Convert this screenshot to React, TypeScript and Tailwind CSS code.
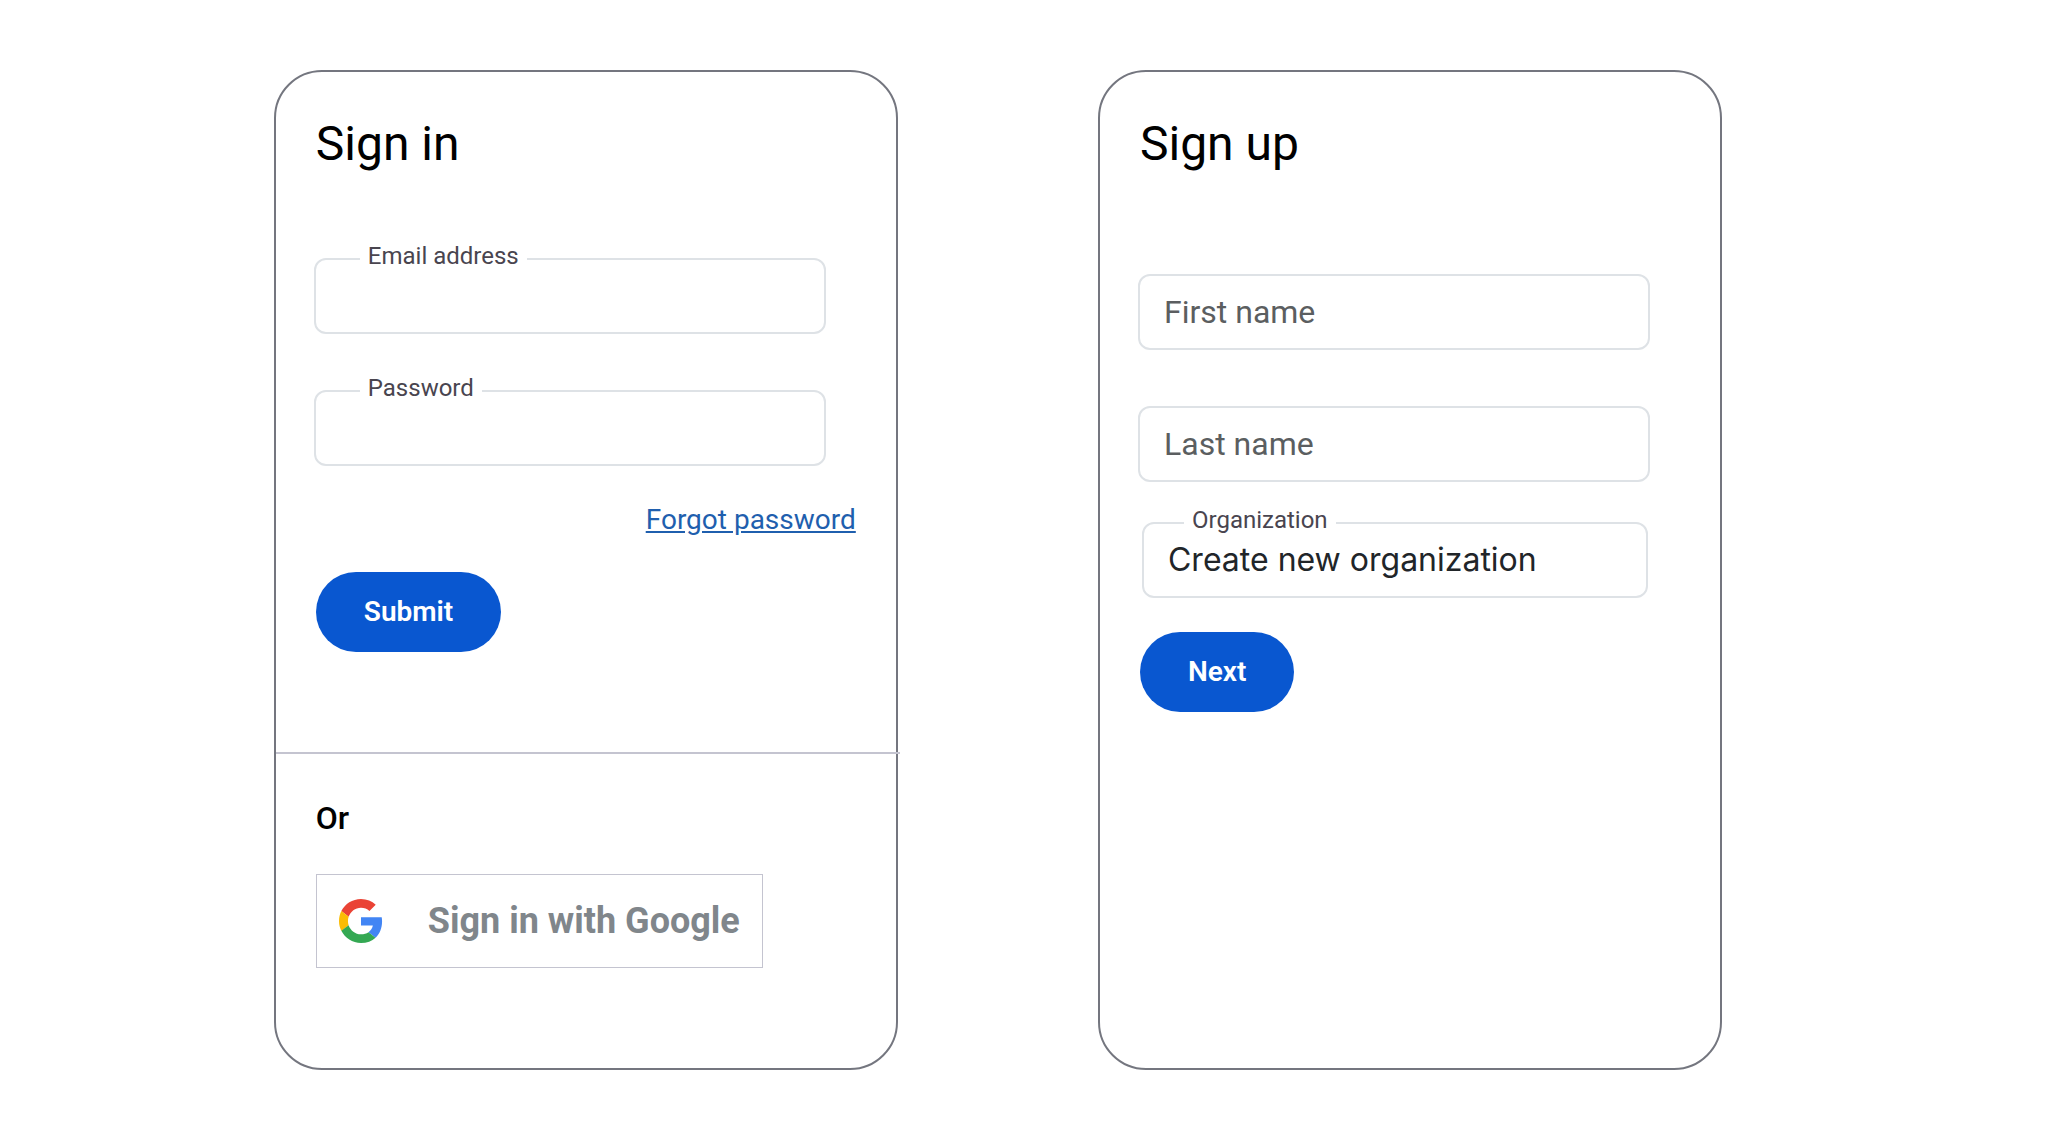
import type { ReactNode } from "react";

const fieldBox =
  "h-[76px] w-full rounded-xl border-2 border-[#dee2e6] bg-white px-6 text-[32px] text-[#212529] outline-none placeholder:text-[#5b5e60] placeholder:opacity-100 focus:border-[#0b57d0]";

const floatingLabel =
  "absolute -top-3.5 left-[46px] bg-white px-2 text-2xl leading-6 text-[#49454f]";

const pillButton =
  "h-20 self-start rounded-full bg-[#0957d0] px-12 text-[28px] leading-10 font-semibold text-white";

function Card({ title, children }: { title: string; children: ReactNode }) {
  return (
    <section className="ml-[68px] flex max-w-[624px] flex-col rounded-[48px] border-2 border-[#74767f] bg-white">
      <h1 className="px-10 pt-10 text-5xl leading-[64px] font-normal">{title}</h1>
      {children}
    </section>
  );
}

function OutlinedField({ id, label, type }: { id: string; label: string; type: string }) {
  return (
    <div className="relative">
      <input id={id} type={type} className={fieldBox} />
      <label htmlFor={id} className={floatingLabel}>
        {label}
      </label>
    </div>
  );
}

function GoogleLogo() {
  return (
    <svg viewBox="0 0 48 48" className="size-11" aria-hidden="true">
      <path
        fill="#EA4335"
        d="M24 9.5c3.54 0 6.71 1.22 9.21 3.6l6.85-6.85C35.9 2.38 30.47 0 24 0 14.62 0 6.51 5.38 2.56 13.22l7.98 6.19C12.43 13.72 17.74 9.5 24 9.5z"
      />
      <path
        fill="#4285F4"
        d="M46.98 24.55c0-1.57-.15-3.09-.38-4.55H24v9.02h12.94c-.58 2.96-2.26 5.48-4.78 7.18l7.73 6c4.51-4.18 7.09-10.36 7.09-17.65z"
      />
      <path
        fill="#FBBC05"
        d="M10.53 28.59c-.48-1.45-.76-2.99-.76-4.59s.27-3.14.76-4.59l-7.98-6.19C.92 16.46 0 20.12 0 24c0 3.88.92 7.54 2.56 10.78l7.97-6.19z"
      />
      <path
        fill="#34A853"
        d="M24 48c6.48 0 11.93-2.13 15.89-5.81l-7.73-6c-2.15 1.45-4.92 2.3-8.16 2.3-6.26 0-11.57-4.22-13.47-9.91l-7.98 6.19C6.51 42.62 14.62 48 24 48z"
      />
    </svg>
  );
}

export default function App() {
  return (
    <main className="min-h-screen bg-white font-['Roboto',sans-serif] text-black">
      <div className="mx-auto grid w-4/5 gap-0.5 py-[70px] lg:grid-cols-2">
        <Card title="Sign in">
          <form className="flex flex-col px-10 pt-[82px]">
            <div className="mr-[30px] -ml-0.5 flex flex-col gap-14">
              <OutlinedField id="email" label="Email address" type="email" />
              <OutlinedField id="password" label="Password" type="password" />
            </div>
            <a
              href="#forgot"
              className="mt-[34px] self-end text-[28px] leading-10 text-[#1f5fae] underline"
            >
              Forgot password
            </a>
            <button type="button" className={`mt-8 ${pillButton}`}>
              Submit
            </button>
          </form>
          <hr className="mt-[100px] -mr-1 border-t-2 border-[#c4c4d0]" />
          <div className="flex flex-col items-start px-10 pt-11 pb-[100px]">
            <h2 className="text-[32px] leading-10 font-medium">Or</h2>
            <button
              type="button"
              className="mt-9 flex h-[94px] items-center gap-[45px] border border-[#c4c4d0] bg-white px-[22px] text-4xl font-bold text-[#80868b]"
            >
              <GoogleLogo />
              Sign in with Google
            </button>
          </div>
        </Card>

        <Card title="Sign up">
          <form className="flex flex-col px-10 pt-[98px] pb-10">
            <div className="mr-[30px] -ml-0.5 flex flex-col">
              <input type="text" aria-label="First name" placeholder="First name" className={fieldBox} />
              <input
                type="text"
                aria-label="Last name"
                placeholder="Last name"
                className={`mt-14 ${fieldBox}`}
              />
              <div className="relative mt-10 pr-0.5 pl-1">
                <select
                  id="organization"
                  className={`appearance-none font-['Inter',sans-serif] ${fieldBox}`}
                >
                  <option>Create new organization</option>
                </select>
                <label htmlFor="organization" className={floatingLabel}>
                  Organization
                </label>
              </div>
            </div>
            <button type="button" className={`mt-[34px] ${pillButton}`}>
              Next
            </button>
          </form>
        </Card>
      </div>
    </main>
  );
}
